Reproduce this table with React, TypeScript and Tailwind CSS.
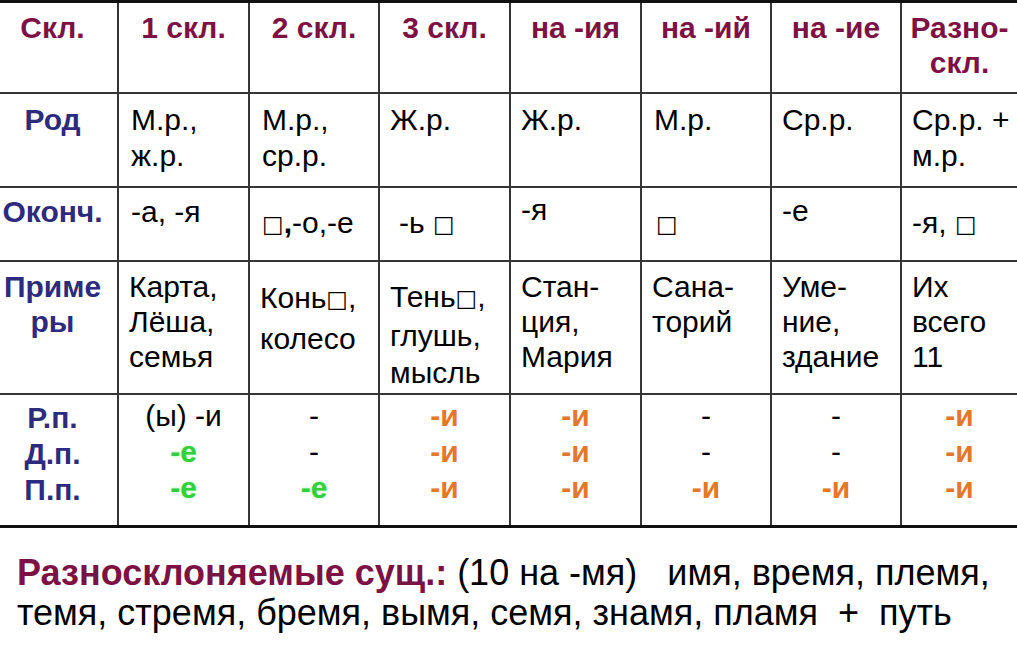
import React from "react";

const B = "border-[#353535]";

function Box() {
  return <span className="font-['DejaVu_Sans'] text-[23px] align-[1px]">□</span>;
}

const maroon = "text-[#7e1144]";
const navy = "text-[#2d2b7d]";

function Orange() {
  return <div className="font-bold text-[#e5772a]">-и</div>;
}
function Green() {
  return <div className="font-bold text-[#2fd03a] [text-shadow:0_0_3px_#a8f0a8]">-е</div>;
}
function Dash() {
  return <div>-</div>;
}

export default function App() {
  const cell = (last: boolean, lastRow: boolean) =>
    `${last ? "" : "border-r-2"} ${lastRow ? "" : "border-b-2"} ${B}`;

  const heads = ["1 скл.", "2 скл.", "3 скл.", "на -ия", "на -ий", "на -ие"];

  return (
    <div className="w-[1017px] h-[651px] bg-white overflow-hidden font-['Liberation_Sans',Arial,sans-serif] text-black text-[30px] leading-[36px]">
      <div className="grid grid-cols-[119px_131px_130px_131px_131px_130px_130px_115px] grid-rows-[91px_94px_74px_133px_130px] border-t-[3px] border-b-[3px] border-[#111]">
        {/* Header row */}
        <div className={`${cell(false, false)} ${maroon} font-bold text-center pr-[12px] pt-[7px]`}>Скл.</div>
        {heads.map((h) => (
          <div key={h} className={`${cell(false, false)} ${maroon} font-bold text-center pt-[7px]`}>
            {h}
          </div>
        ))}
        <div className={`${cell(true, false)} ${maroon} font-bold text-center pt-[7px] leading-[35px]`}>
          Разно-
          <br />
          скл.
        </div>

        {/* Род */}
        <div className={`${cell(false, false)} ${navy} font-bold text-center pr-[12px] pt-[8px]`}>Род</div>
        <div className={`${cell(false, false)} pl-[12px] pt-[8px]`}>М.р.,<br />ж.р.</div>
        <div className={`${cell(false, false)} pl-[12px] pt-[8px]`}>М.р.,<br />ср.р.</div>
        <div className={`${cell(false, false)} pl-[10px] pt-[8px]`}>Ж.р.</div>
        <div className={`${cell(false, false)} pl-[10px] pt-[8px]`}>Ж.р.</div>
        <div className={`${cell(false, false)} pl-[12px] pt-[8px]`}>М.р.</div>
        <div className={`${cell(false, false)} pl-[10px] pt-[8px]`}>Ср.р.</div>
        <div className={`${cell(true, false)} pl-[10px] pt-[8px]`}>Ср.р. +<br />м.р.</div>

        {/* Оконч */}
        <div className={`${cell(false, false)} ${navy} font-bold text-center pr-[12px] pt-[6px]`}>Оконч.</div>
        <div className={`${cell(false, false)} pl-[12px] pt-[6px]`}>-а, -я</div>
        <div className={`${cell(false, false)} pl-[12px] pt-[17px]`}>
          <Box />
          <span className="font-bold">,</span>-о,-е
        </div>
        <div className={`${cell(false, false)} pl-[19px] pt-[17px]`}>
          -ь <Box />
        </div>
        <div className={`${cell(false, false)} pl-[10px] pt-[4px]`}>-я</div>
        <div className={`${cell(false, false)} pl-[14px] pt-[17px]`}>
          <Box />
        </div>
        <div className={`${cell(false, false)} pl-[10px] pt-[5px]`}>-е</div>
        <div className={`${cell(true, false)} pl-[10px] pt-[17px]`}>
          -я, <Box />
        </div>

        {/* Примеры */}
        <div className={`${cell(false, false)} ${navy} font-bold text-center pr-[12px] pt-[7px] leading-[35px]`}>
          Приме
          <br />
          ры
        </div>
        <div className={`${cell(false, false)} pl-[10px] pt-[7px] leading-[35px]`}>Карта,<br />Лёша,<br />семья</div>
        <div className={`${cell(false, false)} pl-[10px] pt-[16px] leading-[40px]`}>
          Конь<Box />,<br />колесо
        </div>
        <div className={`${cell(false, false)} pl-[10px] pt-[16px] leading-[37px]`}>
          Тень<Box />,<br />глушь,<br />мысль
        </div>
        <div className={`${cell(false, false)} pl-[10px] pt-[7px] leading-[35px]`}>Стан-<br />ция,<br />Мария</div>
        <div className={`${cell(false, false)} pl-[10px] pt-[7px] leading-[35px]`}>Сана-<br />торий</div>
        <div className={`${cell(false, false)} pl-[10px] pt-[7px] leading-[35px]`}>Уме-<br />ние,<br />здание</div>
        <div className={`${cell(true, false)} pl-[10px] pt-[7px] leading-[35px]`}>Их<br />всего<br />11</div>

        {/* Падежи */}
        <div className={`${cell(false, true)} ${navy} font-bold text-center pr-[12px] pt-[5px]`}>
          Р.п.
          <br />
          Д.п.
          <br />
          П.п.
        </div>
        <div className={`${cell(false, true)} text-center pt-[3px]`}>
          <div>(ы) -и</div>
          <Green />
          <Green />
        </div>
        <div className={`${cell(false, true)} text-center pt-[3px]`}>
          <Dash />
          <Dash />
          <Green />
        </div>
        <div className={`${cell(false, true)} text-center pt-[3px]`}>
          <Orange />
          <Orange />
          <Orange />
        </div>
        <div className={`${cell(false, true)} text-center pt-[3px]`}>
          <Orange />
          <Orange />
          <Orange />
        </div>
        <div className={`${cell(false, true)} text-center pt-[3px]`}>
          <Dash />
          <Dash />
          <Orange />
        </div>
        <div className={`${cell(false, true)} text-center pt-[3px]`}>
          <Dash />
          <Dash />
          <Orange />
        </div>
        <div className={`${cell(true, true)} text-center pt-[3px]`}>
          <Orange />
          <Orange />
          <Orange />
        </div>
      </div>

      <div className="pl-[17px] pt-[25px] text-[36px] leading-[40px]">
        <div className="whitespace-pre">
          <span className={`${maroon} font-bold`}>Разносклоняемые сущ.:</span> (10 на -мя)   имя, время, племя,
        </div>
        <div className="whitespace-pre">темя, стремя, бремя, вымя, семя, знамя, пламя  +  путь</div>
      </div>
    </div>
  );
}
